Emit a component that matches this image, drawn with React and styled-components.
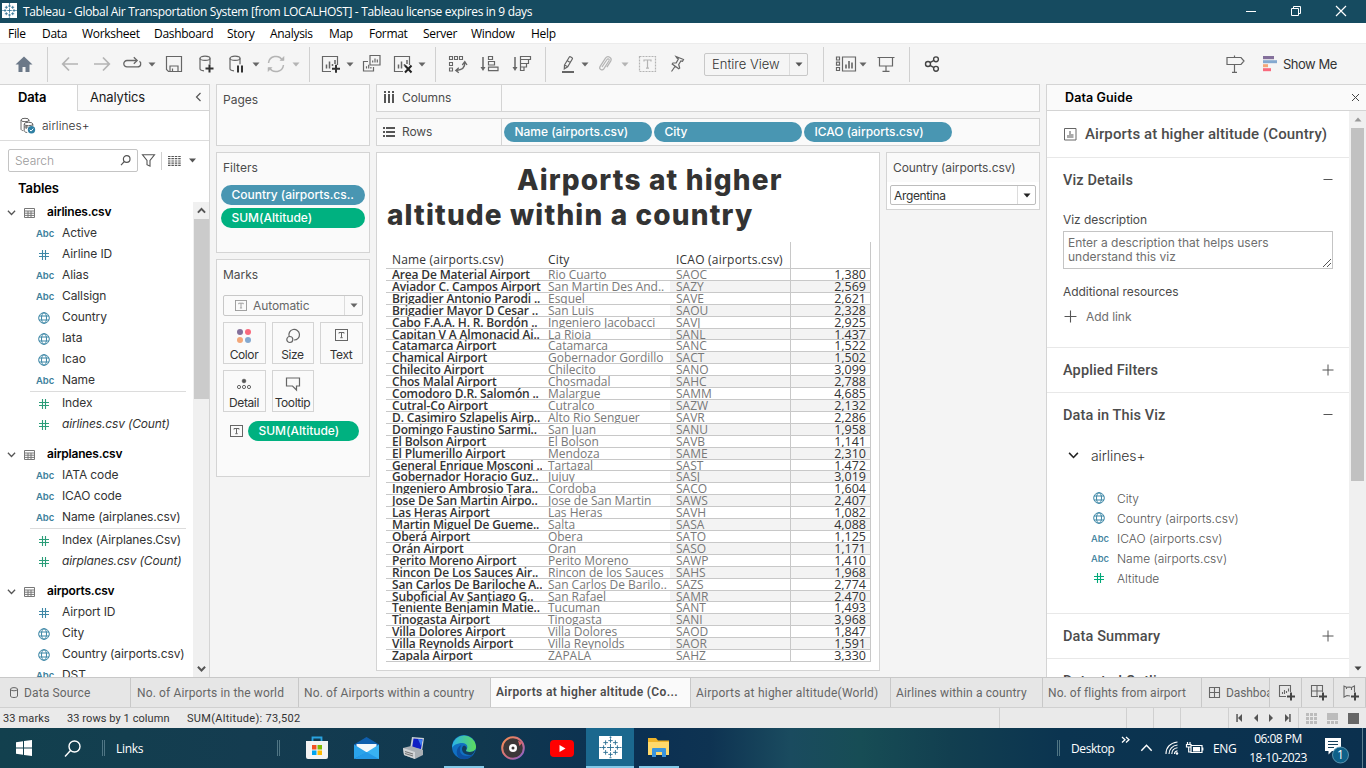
import React from 'react';
import styled, { createGlobalStyle, css } from 'styled-components';

const sans = '"Inter", "Liberation Sans", sans-serif';
const segoe = '"Open Sans", "Noto Sans", sans-serif';
const roboto = '"Roboto", "Liberation Sans", sans-serif';
const line = '#d4d4d4';
const blue = '#4996b2';
const green = '#00b180';

const Global = createGlobalStyle`
  * { box-sizing: border-box; }
  body { margin: 0; overflow: hidden; background: #f5f5f5; font-family: ${sans}; }
`;

const Window = styled.div`
  width: 1366px;
  height: 768px;
  display: flex;
  flex-direction: column;
  overflow: hidden;
  color: #333;
  font-size: 12px;
  white-space: nowrap;
`;

const Icon = styled.svg`
  display: block;
  flex: none;
  fill: none;
  overflow: visible;
`;

/* ---------- title bar and menu ---------- */

const TitleBar = styled.header`
  height: 23px;
  flex: none;
  display: flex;
  align-items: center;
  padding: 0 20px 2px 2px;
  background: #164b60;
  color: #fff;
  font: 12px ${segoe};
`;
const TitleText = styled.span`
  margin-left: 6px;
  padding-top: 2px;
  letter-spacing: -0.34px;
`;
const WindowButtons = styled.div`
  margin-left: auto;
  display: flex;
  gap: 35px;
`;
const MenuBar = styled.nav`
  height: 20px;
  flex: none;
  display: flex;
  align-items: center;
  padding: 1px 0 0 8px;
  background: #fff;
  color: #000;
  font: 12px ${segoe};
`;
const MenuItem = styled.span`
  width: ${(p) => p.$w}px;
  flex: none;
  letter-spacing: -0.3px;
`;

/* ---------- toolbar ---------- */

const Toolbar = styled.div`
  height: 41px;
  flex: none;
  display: flex;
  align-items: center;
  background: #f5f5f5;
  border-top: 1px solid #ececec;
`;
const Tool = styled.div`
  flex: none;
  margin-left: ${(p) => p.$gap}px;
  opacity: ${(p) => (p.$off ? 0.45 : 1)};
`;
const Divider = styled.i`
  flex: none;
  width: 1px;
  height: 35px;
  margin-left: ${(p) => p.$gap}px;
  background: #d0d0d0;
`;
const ViewSelect = styled.div`
  flex: none;
  width: 104px;
  height: 23px;
  margin-left: 17px;
  display: flex;
  align-items: center;
  border: 1px solid #c8c8c8;
  border-radius: 2px;
  color: #333;
  font-size: 13px;
  font-weight: 300;
`;
const SelectText = styled.span`
  flex: 1;
  padding-left: ${(p) => p.$pad}px;
  display: flex;
  align-items: center;
  gap: 6px;
  letter-spacing: ${(p) => p.$ls || 0}px;
`;
const SelectArrow = styled.span`
  align-self: stretch;
  width: 18px;
  display: flex;
  align-items: center;
  justify-content: center;
  border-left: 1px solid #dcdcdc;
`;
const ShowMe = styled.div`
  width: 103px;
  display: flex;
  align-items: center;
  gap: 5px;
  margin-left: 15px;
  font-size: 13px;
  letter-spacing: -0.5px;
`;

/* ---------- workspace ---------- */

const Workspace = styled.main`
  height: 593px;
  flex: none;
  display: flex;
  background: #f4f4f4;
`;
const DataPane = styled.aside`
  width: 210px;
  flex: none;
  display: flex;
  flex-direction: column;
  background: #fff;
  border-right: 1px solid ${line};
  border-top: 1px solid ${line};
`;
const PaneTabs = styled.div`
  height: 26px;
  flex: none;
  display: flex;
`;
const PaneTab = styled.div`
  display: flex;
  align-items: center;
  justify-content: space-between;
  width: ${(p) => p.$w}px;
  padding: 0 7px 1px ${(p) => p.$pad}px;
  color: #1a1a1a;
  font-size: 13px;
  letter-spacing: -0.15px;
  ${(p) =>
    p.$active
      ? css`
          padding-bottom: 2px;
          color: #000;
          font-weight: 600;
          letter-spacing: -0.2px;
        `
      : css`
          background: #fafafa;
          border-left: 1px solid ${line};
          border-bottom: 1px solid ${line};
        `}
`;
const SourceRow = styled.div`
  height: 30px;
  flex: none;
  display: flex;
  align-items: center;
  gap: 6px;
  padding: 0 0 1px 19px;
  border-bottom: 1px solid #dcdcdc;
  color: #333;
  font-weight: 300;
`;
const SearchRow = styled.div`
  height: 39px;
  flex: none;
  display: flex;
  align-items: center;
  padding-left: 8px;
`;
const SearchBox = styled.div`
  width: 130px;
  height: 23px;
  display: flex;
  align-items: center;
  justify-content: space-between;
  padding: 0 6px;
  border: 1px solid #c4c4c4;
  border-radius: 2px;
  color: #999;
  font-weight: 300;
`;
const SearchTools = styled.div`
  display: flex;
  align-items: center;
  gap: 6px;
  margin-left: 4px;
`;
const ToolLine = styled.i`
  width: 1px;
  height: 18px;
  background: #d0d0d0;
`;
const TablesTitle = styled.div`
  height: 22px;
  flex: none;
  padding: 1px 0 0 18px;
  color: #000;
  font-size: 13px;
  line-height: 15px;
  font-weight: 600;
  letter-spacing: -0.1px;
`;
const TreeArea = styled.div`
  flex: 1;
  min-height: 0;
  display: flex;
`;
const Tree = styled.div`
  flex: 1;
  overflow: hidden;
`;
const TreeGroup = styled.section`
  margin-bottom: 9px;
`;
const GroupHeader = styled.div`
  height: 21px;
  display: flex;
  align-items: center;
  padding-left: 7px;
  color: #000;
  font-weight: 600;
  letter-spacing: -0.2px;
`;
const GroupName = styled.span`
  margin-left: 12px;
  padding-bottom: 2px;
`;
const TreeItem = styled.div`
  height: 21px;
  display: flex;
  align-items: center;
  padding-left: 35px;
  color: #333;
  font-size: 12px;
  letter-spacing: ${(p) => (p.$count ? -0.15 : -0.1)}px;
  font-style: ${(p) => (p.$count ? 'italic' : 'normal')};
`;
const FieldName = styled.span`
  padding-bottom: 2px;
`;
const FieldMark = styled.span`
  flex: none;
  width: 27px;
  display: flex;
  align-items: center;
  padding-left: ${(p) => (p.$abc ? 1 : 3)}px;
  color: #3d7f9c;
  font: ${(p) => (p.$light ? 500 : 600)} 9.5px ${sans};
  letter-spacing: -0.1px;
`;
const TreeRule = styled.div`
  height: 2px;
  margin: 0 7px 0 30px;
  border-top: 1px solid #dcdcdc;
`;
const ScrollTrack = styled.div`
  width: ${(p) => p.$w}px;
  flex: none;
  display: flex;
  flex-direction: column;
  align-items: center;
  background: #f0f0f0;
`;
const ScrollThumb = styled.i`
  width: ${(p) => p.$w}px;
  height: ${(p) => p.$h}px;
  background: ${(p) => p.$c};
`;
const ScrollEnd = styled.span`
  height: 17px;
  display: flex;
  align-items: center;
  margin-top: ${(p) => (p.$last ? 'auto' : 0)};
`;

/* ---------- cards ---------- */

const CardColumn = styled.div`
  width: 154px;
  flex: none;
  margin-left: 6px;
  display: flex;
  flex-direction: column;
  gap: 6px;
`;
const Card = styled.section`
  height: ${(p) => p.$h}px;
  flex: none;
  background: #fafafa;
  border: 1px solid ${line};
  padding: 0 4px;
`;
const CardTitle = styled.h3`
  margin: 0;
  padding: 6px 2px 0;
  height: ${(p) => p.$h || 32}px;
  color: #4c4c4c;
  font: 400 12px/17px ${sans};
`;
const Pill = styled.div`
  width: ${(p) => p.$w}px;
  height: 20px;
  flex: none;
  margin-bottom: ${(p) => p.$below || 0}px;
  padding: 0 10.5px;
  border-radius: 10px;
  background: ${(p) => (p.$measure ? green : blue)};
  color: #fff;
  font: 500 12px/20px ${sans};
  letter-spacing: -0.02px;
`;
const MarkSelect = styled.div`
  width: 140px;
  height: 21px;
  margin: 4px 0 6px 2px;
  display: flex;
  align-items: center;
  border: 1px solid #c8c8c8;
  border-radius: 2px;
  color: #666;
`;
const MarkGrid = styled.div`
  display: grid;
  grid-template-columns: 43px 42px 43px;
  grid-auto-rows: 42px;
  gap: 6px;
  padding-left: 2px;
`;
const MarkButton = styled.div`
  display: flex;
  flex-direction: column;
  align-items: center;
  justify-content: space-between;
  padding: 5px 1px 1px 0;
  border: 1px solid ${line};
  color: #333;
  font-size: 12px;
  line-height: 14px;
  letter-spacing: -0.4px;
`;
const MarkShelf = styled.div`
  display: flex;
  align-items: center;
  gap: 5px;
  margin-top: 9px;
  padding-left: 9px;
`;

/* ---------- view ---------- */

const Center = styled.div`
  width: 664px;
  flex: none;
  margin-left: 6px;
  display: flex;
  flex-direction: column;
  gap: 6px;
`;
const Shelf = styled.div`
  height: 28px;
  flex: none;
  display: flex;
  align-items: center;
  gap: 2px;
  background: #fafafa;
  border: 1px solid ${line};
`;
const ShelfName = styled.div`
  width: 125px;
  align-self: stretch;
  display: flex;
  align-items: center;
  gap: 6px;
  padding: 0 0 1px 6px;
  border-right: 1px solid ${line};
  color: #4c4c4c;
  letter-spacing: -0.1px;
`;
const CanvasRow = styled.div`
  display: flex;
  align-items: flex-start;
  gap: 6px;
`;
const Sheet = styled.section`
  width: 504px;
  height: 519px;
  flex: none;
  background: #fff;
  border: 1px solid ${line};
  padding: 10px 9px 0;
`;
const SheetTitle = styled.h1`
  height: 79px;
  margin: 0;
  padding-left: 1px;
  color: #333;
  font: 800 28px/35px ${sans};
  letter-spacing: 1.15px;
`;
const TitleLine = styled.span`
  display: block;
  padding-left: ${(p) => p.$indent}px;
`;
const Grid = styled.div`
  width: 485px;
  color: #333;
`;
const HeadRow = styled.div`
  height: 27px;
  display: flex;
  border-bottom: 1px solid #c8c8c8;
`;
const DataRow = styled.div`
  height: ${(p) => (p.$short ? 11 : 12)}px;
  display: flex;
  border-bottom: 1px solid #c8c8c8;
  line-height: ${(p) => (p.$short ? 11 : 12)}px;
`;
const Cell = styled.span`
  width: ${(p) => p.$w}px;
  flex: none;
  padding: ${(p) => (p.$head ? '9px 0 0 6px' : '0 0 0 6px')};
  overflow: hidden;
  color: ${(p) => p.$c || '#333'};
  font-family: ${segoe};
  font-size: ${(p) => p.$size || 12}px;
  font-weight: ${(p) => p.$weight || 400};
  letter-spacing: ${(p) => p.$ls || 0}px;
  background: ${(p) => (p.$band ? '#f3f3f3' : 'transparent')};
`;
const ValueCell = styled(Cell)`
  padding: 0 4px 0 0;
  text-align: right;
  border-left: 1px solid #c8c8c8;
  border-right: 1px solid #c8c8c8;
`;
const FilterCard = styled.section`
  width: 154px;
  height: 58px;
  background: #fff;
  border: 1px solid ${line};
`;
const FilterTitle = styled.div`
  height: 29px;
  padding-left: 6px;
  background: #fafafa;
  color: #4c4c4c;
  line-height: 29px;
  letter-spacing: -0.1px;
`;
const FilterSelect = styled.div`
  height: 20px;
  margin: 3px 3px 0;
  display: flex;
  align-items: center;
  border: 1px solid #bdbdbd;
  border-radius: 2px;
  background: #fff;
`;

/* ---------- data guide ---------- */

const Guide = styled.aside`
  width: 320px;
  margin-left: 6px;
  flex: none;
  display: flex;
  flex-direction: column;
  background: #fff;
  border-left: 1px solid ${line};
  border-top: 1px solid ${line};
`;
const GuideHeader = styled.div`
  height: 26px;
  flex: none;
  display: flex;
  align-items: center;
  justify-content: space-between;
  padding: 0 7px 1px 18px;
  background: #fafafa;
  border-bottom: 1px solid ${line};
  color: #000;
  font-size: 12.5px;
  font-weight: 600;
  letter-spacing: 0.12px;
`;
const GuideBody = styled.div`
  flex: 1;
  min-height: 0;
  display: flex;
`;
const GuideContent = styled.div`
  flex: 1;
  overflow: hidden;
`;
const GuideSection = styled.section`
  height: ${(p) => p.$h}px;
  padding: 0 15px 0 16px;
  border-bottom: 1px solid #e8e8e8;
`;
const GuideTitle = styled.div`
  height: 46px;
  display: flex;
  align-items: center;
  gap: 8px;
  padding-left: 1px;
  font: 500 15px ${roboto};
  letter-spacing: 0.1px;
  color: #4c4c4c;
`;
const SectionHead = styled.div`
  height: 44px;
  display: flex;
  align-items: center;
  justify-content: space-between;
  color: #4c4c4c;
  font: 500 14.5px ${roboto};
  letter-spacing: 0.12px;
`;
const FormLabel = styled.div`
  height: ${(p) => p.$h}px;
  padding-top: ${(p) => p.$top}px;
  color: #4a4a4a;
  line-height: 16px;
  letter-spacing: -0.05px;
`;
const Description = styled.div`
  position: relative;
  width: 270px;
  height: 38px;
  padding: 4px;
  border: 1px solid #c4c4c4;
  color: #6e6e6e;
  line-height: 14px;
`;
const Grip = styled(Icon)`
  position: absolute;
  right: 1px;
  bottom: 1px;
`;
const AddLink = styled.div`
  display: flex;
  align-items: center;
  gap: 9px;
  height: 17px;
  padding-left: 1px;
  color: #6e6e6e;
  letter-spacing: -0.05px;
`;
const SourceName = styled.div`
  height: 37px;
  display: flex;
  align-items: center;
  gap: 12px;
  padding-left: 5px;
  color: #333;
  font-size: 14px;
  font-weight: 300;
  letter-spacing: -0.1px;
`;
const GuideFields = styled.div`
  padding: 15px 0 0 27px;
`;
const GuideField = styled.div`
  height: 20px;
  display: flex;
  align-items: center;
  padding-bottom: 2px;
  color: #555;
  font-weight: 300;
`;

/* ---------- sheet tabs and status ---------- */

const SheetTabs = styled.div`
  height: 31px;
  flex: none;
  display: flex;
  background: #e6e6e6;
  border-top: 1px solid #c8c8c8;
  border-bottom: 1px solid #d0d0d0;
`;
const SheetTab = styled.div`
  width: ${(p) => p.$w}px;
  flex: none;
  display: flex;
  align-items: center;
  gap: 6px;
  padding-left: ${(p) => p.$pad || 5}px;
  overflow: hidden;
  border-right: 1px solid #c8c8c8;
  color: #666;
  font: ${(p) => (p.$active ? 600 : 400)} 12px ${roboto};
  letter-spacing: ${(p) => p.$ls ?? 0.13}px;
  ${(p) => p.$active && 'background:#fafafa;color:#4c4c4c;padding-bottom:2px;'}
`;
const StatusBar = styled.div`
  height: 20px;
  flex: none;
  display: flex;
  align-items: center;
  background: #eaeaea;
  padding-left: 3px;
  color: #333;
  font: 11px ${roboto};
`;
const StatusText = styled.span`
  width: ${(p) => p.$w}px;
  letter-spacing: ${(p) => p.$ls}px;
`;
const StatusCell = styled.div`
  width: ${(p) => p.$w}px;
  align-self: stretch;
  display: flex;
  align-items: center;
  justify-content: center;
  gap: ${(p) => p.$gap || 9}px;
  border-left: 1px solid #d0d0d0;
`;

/* ---------- taskbar ---------- */

const Taskbar = styled.footer`
  height: 40px;
  flex: none;
  display: flex;
  align-items: center;
  color: #fff;
  font: 12px ${segoe};
  background: linear-gradient(90deg, #12404e 0, #143c50 250px, #10384f 480px, #0b3052 640px, #0e3352 710px, #1a4b5f 790px, #174d55 860px, #123f50 950px, #0b3450 1060px, #0b304e 1366px);
`;
const TaskItem = styled.div`
  flex: none;
  width: ${(p) => p.$w}px;
  height: 40px;
  margin-left: ${(p) => p.$gap || 0}px;
  display: flex;
  align-items: center;
  justify-content: center;
  background: ${(p) => (p.$active ? '#1b688e' : 'transparent')};
  border-bottom: ${(p) => (p.$open ? '2px solid #84c9e8' : '0')};
`;
const TaskText = styled.span`
  flex: none;
  width: ${(p) => p.$w}px;
  margin-left: ${(p) => p.$gap || 0}px;
  letter-spacing: ${(p) => p.$ls || 0}px;
`;
const TaskHandle = styled.i`
  flex: none;
  width: 3px;
  height: 16px;
  margin-left: ${(p) => p.$gap}px;
  border: solid #4f7584;
  border-width: 0 1px;
`;
const Clock = styled.div`
  width: 70px;
  margin-left: 4px;
  line-height: 19px;
  text-align: center;
  letter-spacing: -0.5px;
`;
const DesktopEdge = styled.i`
  width: 1px;
  height: 40px;
  margin-left: 12px;
  background: #5d7f90;
`;

/* ---------- drawings ---------- */

const Svg = ({ w = 20, h = w, box, c = '#666', sw = 1.2, children, ...rest }) => (
  <Icon width={w} height={h} viewBox={box || `0 0 ${w} ${h}`} stroke={c} strokeWidth={sw} {...rest}>
    {children}
  </Icon>
);
const Caret = ({ w = 8, c = '#666' }) => (
  <Svg w={w} h={5} box="0 0 8 5" c="none">
    <path d="M0.5 .5h7L4 4.5z" fill={c} />
  </Svg>
);
const Plus = ({ s = 12, c = '#555' }) => (
  <Svg w={s} c={c} sw={1} box="0 0 12 12"><path d="M6 .5v11M.5 6h11" /></Svg>
);
const Minus = () => <Svg w={12} c="#555" sw={1}><path d="M1.5 5.5h9" /></Svg>;
const Chevron = ({ w = 9, c = '#555', up, sw = 1.4 }) => (
  <Svg w={w} h={w * 0.6} box="0 0 10 6" c={c} sw={sw}>
    <path d={up ? 'M1 5.2L5 1l4 4.2' : 'M1 .8L5 5l4-4.2'} />
  </Svg>
);
const Globe = () => (
  <Svg w={12} c="#3d87a6" sw={1}>
    <circle cx="6" cy="6" r="5.3" />
    <ellipse cx="6" cy="6" rx="2.5" ry="5.3" />
    <path d="M1 4h10M1 8h10" />
  </Svg>
);
const Hash = ({ c = '#3d87a6' }) => (
  <Svg w={12} c={c} sw={1.1}><path d="M4.5 1v10M7.5 1v10M1 4.5h10M1 7.5h10" /></Svg>
);
const TextBox = ({ w = 13, h = 12, c = '#666' }) => (
  <Svg w={w} h={h} box="0 0 13 12" c={c} sw={1}>
    <rect x=".5" y=".5" width="12" height="11" />
    <path d="M4 4.6V3.5h5v1.1M6.5 3.5v5M5.3 8.7h2.4" />
  </Svg>
);
const TableIcon = () => (
  <Svg w={11} h={10} c="#777" sw={1}>
    <path d="M.5 .5h10v9H.5zM.5 3h10M.5 5.2h10M.5 7.4h10M4 3v6.5M7 3v6.5" />
  </Svg>
);
const Mark = ({ type, measure, light }) => (
  <FieldMark $abc={type === 'abc'} $light={light}>
    {type === 'abc' ? 'Abc' : type === 'geo' ? <Globe /> : <Hash c={measure ? (light ? '#00a878' : '#2a9d78') : '#3d87a6'} />}
  </FieldMark>
);
const crosses = [
  [8, 8, 2.4], [8, 3.2, 1.5], [8, 12.8, 1.5], [3.2, 8, 1.5], [12.8, 8, 1.5],
  [4.6, 4.6, 1.6], [11.4, 4.6, 1.6], [4.6, 11.4, 1.6], [11.4, 11.4, 1.6],
];
const TableauLogo = ({ s }) => (
  <Svg w={s} box="0 0 16 16" c="#2d7194" sw={s > 20 ? 0.65 : 0.9}>
    <rect width="16" height="16" fill="#fff" stroke="none" />
    {crosses.map(([x, y, r], i) => (
      <path key={i} d={`M${x - r} ${y}h${2 * r}M${x} ${y - r}v${2 * r}`} />
    ))}
    <path d="M7.3 .9h1.4M8 .3v1.4M7.3 15.1h1.4M.3 8h1.4M14.3 8h1.4" />
  </Svg>
);

const Cylinder = () => (
  <>
    <ellipse cx="9" cy="4.3" rx="5" ry="2.1" />
    <path d="M4 4.3v10.5c0 1.2 1.8 1.9 4 2M14 4.3v6" />
  </>
);
const PlusMark = ({ x, y }) => (
  <path d={`M${x - 4} ${y}h8M${x} ${y - 4}v8`} stroke="#333" strokeWidth="2" />
);

const HomeIcon = () => (
  <Svg c="none"><path d="M10 2.5L1.5 10.5h3V18h4v-5h3v5h4v-7.5h3z" fill="#6b7888" /></Svg>
);
const ArrowIcon = ({ right }) => (
  <Svg c="#666" sw={1.7}>
    <path d={right ? 'M2 10h15M11 3.5l6.3 6.5-6.3 6.5' : 'M18 10H3M9 3.5L2.7 10 9 16.5'} />
  </Svg>
);
const LoopIcon = () => (
  <Svg sw={1.3}>
    <path d="M14.5 6.5H5a3.200 3.200 0 000 6.400h10.500c3.500 0 4.200-4 2-5.600" />
    <path d="M11.800 3.200l3.400 3.300-3.400 3.300" />
  </Svg>
);
const SaveIcon = () => (
  <Svg><path d="M2.5 2.5h15v15H4.5l-2-2zM6 17.5v-5.5h8v5.5M8.5 17.5v-3" /></Svg>
);
const AddSourceIcon = () => <Svg><Cylinder /><PlusMark x={13.5} y={14.5} /></Svg>;
const PauseIcon = () => (
  <Svg><Cylinder /><path d="M12 11.5v7M16 11.5v7" stroke="#333" strokeWidth="2" /></Svg>
);
const RefreshIcon = () => (
  <Svg sw={1.5}>
    <path d="M2.5 9a7.5 7.5 0 0114-2.7M17.5 11a7.5 7.5 0 01-14 2.7" />
    <path d="M14 6.5h4V2.5zM6 13.5H2v4z" fill="#666" strokeWidth=".5" />
  </Svg>
);
const NewSheetIcon = ({ clear }) => (
  <Svg>
    <path d="M10 17.5H1.5v-15h15V11" />
    <path d="M5.5 14.5v-4M8.5 14.5v-7M11.5 12v-2M14 10V6" strokeWidth="1.5" />
    {clear ? <path d="M12 11.5l6.5 7M18.5 11.5l-6.5 7" stroke="#222" strokeWidth="2" /> : <PlusMark x={15} y={14.8} />}
  </Svg>
);
const DuplicateIcon = () => (
  <Svg>
    <path d="M8 1.5h10v9.5H8zM6 7.5H1.5v9.5h10V13" />
    <path d="M10.7 8.5V6.5M13 8.5V4.5M15.3 8.5V5.5M4.5 14.5v-2.3M6.7 14.5v-3.7M8.9 14.5V13" />
  </Svg>
);
const SwapIcon = () => (
  <Svg sw={1.1}>
    <path d="M1.5 2.5h3v3h-3zM6.5 2.5h3v3h-3zM11.5 2.5h3v3h-3zM1.5 8.5h3v3h-3zM1.5 14h3v3h-3z" />
    <path d="M16.8 8.5c.3 4.5-2.5 7.5-8.5 8M14.3 11l2.5-3.3L19 11M10.8 13.800l-3 2.700 3 2.300" strokeWidth="1.3" />
  </Svg>
);
const SortIcon = ({ desc }) => (
  <Svg>
    <path d="M2 3v12" strokeWidth="1.5" />
    <path d="M-.5 13h5L2 17z" fill="#666" stroke="none" />
    {desc ? (
      <path d="M7.500 2.500h10v3h-10zM7.500 5.500h8v4h-8zM7.500 9.500h6v3.500h-6zM7.500 13h3.500v3.500H7.500z" />
    ) : (
      <path d="M7.500 2.500h4v3h-4zM7.500 7.500h6v3.500h-6zM7.500 13.200h9.500v3.500H7.500z" />
    )}
  </Svg>
);
const PenIcon = () => (
  <Svg sw={1.2}>
    <path d="M6.500 11l4.700-7.800c.3-.5.8-.6 1.200-.4l1.600 1c.5.3.6.8.3 1.200L9.700 12.800l-3.400 2zM6.500 11l3.200 1.800M9.300 6.800l3 1.800" />
    <path d="M4 18h12" strokeWidth="2" />
  </Svg>
);
const ClipIcon = () => (
  <Svg><path d="M7 13l5-7.5c1-1.4 2.8-.3 2 1.2l-5.2 8.2c-1.6 2.3-5.2.3-3.8-2.3l5.5-8.4c2.4-3.3 7-.4 5.2 2.9l-3.8 6" /></Svg>
);
const LabelIcon = () => (
  <Svg>
    <rect x="1.5" y="2.5" width="16" height="15" strokeDasharray="2 1" />
    <path d="M6 7.5V6h7v1.5M9.5 6v8M8 14.2h3" />
  </Svg>
);
const PinIcon = () => (
  <Svg><path d="M9 2.5l7.5 3-1 1.8-1.6-.3-2.2 3.5 1 3.5-1 .8-6.5-4.8.7-1 3.3-.2 2.2-3.8-1.4-1zM8 12.500l-3.500 5" /></Svg>
);
const ShowCardsIcon = () => (
  <Svg w={22} h={20}>
    <path d="M1.5 3h3v3h-3zM1.5 8.2h3v3h-3zM1.5 13.5h3v3h-3zM7.5 3h13v14h-13z" />
    <path d="M11 14.5v-4M14 14.5V7M17 14.5v-6" strokeWidth="1.6" />
  </Svg>
);
const PresentIcon = () => (
  <Svg><path d="M1.5 3.5h17M3.5 3.5v8.5h13V3.5M10 12v5M6.5 17.3h7" strokeWidth="1.2" /></Svg>
);
const ShareIcon = () => (
  <Svg sw={1.4} c="#444">
    <circle cx="6" cy="10" r="2.5" /><circle cx="14" cy="5.3" r="2.4" /><circle cx="14" cy="14.8" r="2.4" />
    <path d="M8 8.7l4-2.3M8 11.3l4 2.3" />
  </Svg>
);
const SignIcon = () => (
  <Svg><path d="M2 3.5h14l3 3.5-3 3.5H2zM9.5 1.5v2M9.5 10.5V18M7 18.4h5" /></Svg>
);
const ShowMeIcon = () => (
  <Svg w={18} h={16} c="none">
    <path d="M3 0h11v3.200H3z" fill="#84709b" /><path d="M3 4.200h14v3H3z" fill="#84a9d0" />
    <path d="M3 8.200h5v3H3z" fill="#f3a779" /><path d="M3 12.200h8v3H3z" fill="#f96a7d" />
  </Svg>
);

/* ---------- data ---------- */

const groups = [
  {
    name: 'airlines.csv',
    fields: [['abc', 'Active'], ['num', 'Airline ID'], ['abc', 'Alias'], ['abc', 'Callsign'], ['geo', 'Country'], ['geo', 'Iata'], ['geo', 'Icao'], ['abc', 'Name']],
    measures: ['Index', 'airlines.csv (Count)'],
  },
  {
    name: 'airplanes.csv',
    fields: [['abc', 'IATA code'], ['abc', 'ICAO code'], ['abc', 'Name (airplanes.csv)']],
    measures: ['Index (Airplanes.Csv)', 'airplanes.csv (Count)'],
  },
  {
    name: 'airports.csv',
    fields: [['num', 'Airport ID'], ['geo', 'City'], ['geo', 'Country (airports.csv)'], ['abc', 'DST']],
    measures: [],
  },
];

const airports = `Area De Material Airport|Rio Cuarto|SAOC|1,380
Aviador C. Campos Airport|San Martin Des And..|SAZY|2,569
Brigadier Antonio Parodi ..|Esquel|SAVE|2,621
Brigadier Mayor D Cesar ..|San Luis|SAOU|2,328
Cabo F.A.A. H. R. Bordón ..|Ingeniero Jacobacci|SAVJ|2,925
Capitan V A Almonacid Ai..|La Rioja|SANL|1,437
Catamarca Airport|Catamarca|SANC|1,522
Chamical Airport|Gobernador Gordillo|SACT|1,502
Chilecito Airport|Chilecito|SANO|3,099
Chos Malal Airport|Chosmadal|SAHC|2,788
Comodoro D.R. Salomón ..|Malargue|SAMM|4,685
Cutral-Co Airport|Cutralco|SAZW|2,132
D. Casimiro Szlapelis Airp..|Alto Rio Senguer|SAVR|2,286
Domingo Faustino Sarmi..|San Juan|SANU|1,958
El Bolson Airport|El Bolson|SAVB|1,141
El Plumerillo Airport|Mendoza|SAME|2,310
General Enrique Mosconi ..|Tartagal|SAST|1,472
Gobernador Horacio Guz..|Jujuy|SASJ|3,019
Ingeniero Ambrosio Tara..|Cordoba|SACO|1,604
Jose De San Martin Airpo..|Jose de San Martin|SAWS|2,407
Las Heras Airport|Las Heras|SAVH|1,082
Martin Miguel De Gueme..|Salta|SASA|4,088
Oberá Airport|Obera|SATO|1,125
Orán Airport|Oran|SASO|1,171
Perito Moreno Airport|Perito Moreno|SAWP|1,410
Rincon De Los Sauces Air..|Rincon de los Sauces|SAHS|1,968
San Carlos De Bariloche A..|San Carlos De Barilo..|SAZS|2,774
Suboficial Ay Santiago G..|San Rafael|SAMR|2,470
Teniente Benjamin Matie..|Tucuman|SANT|1,493
Tinogasta Airport|Tinogasta|SANI|3,968
Villa Dolores Airport|Villa Dolores|SAOD|1,847
Villa Reynolds Airport|Villa Reynolds|SAOR|1,591
Zapala Airport|ZAPALA|SAHZ|3,330`.split('\n').map((r) => r.split('|'));

const menus = [['File', 34], ['Data', 40], ['Worksheet', 72], ['Dashboard', 73], ['Story', 43], ['Analysis', 59], ['Map', 40], ['Format', 54], ['Server', 48], ['Window', 60], ['Help', 40]];

const tools = [
  [14, HomeIcon], 13, [12, ArrowIcon, { off: true }], [12, ArrowIcon, { right: true, off: true }],
  [10, LoopIcon], [6, Caret], [8, SaveIcon], [12, AddSourceIcon], [10, PauseIcon], [6, Caret],
  [6, RefreshIcon, { off: true }], [6, Caret, { off: true }], 9,
  [11, NewSheetIcon], [5, Caret], [8, DuplicateIcon], [11, NewSheetIcon, { clear: true }], [5, Caret], 9,
  [12, SwapIcon], [13, SortIcon], [12, SortIcon, { desc: true }], 12,
  [12, PenIcon], [3, Caret], [6, ClipIcon, { off: true }], [6, Caret, { off: true }], [9, LabelIcon, { off: true }], [9, PinIcon],
];
const toolsAfter = [15, [11, ShowCardsIcon], [2, Caret], [9, PresentIcon], 13, [12, ShareIcon]];

const renderTool = (t, i) => {
  if (typeof t === 'number') return <Divider key={i} $gap={t} />;
  const [gap, Glyph, { off, ...props } = {}] = t;
  return <Tool key={i} $gap={gap} $off={off}><Glyph {...props} /></Tool>;
};

/* ---------- sections ---------- */

function TreePane() {
  return (
    <DataPane>
      <PaneTabs>
        <PaneTab $w={77} $pad={18} $active>Data</PaneTab>
        <PaneTab $w={132} $pad={12}>
          Analytics
          <Svg w={7} h={10} c="#555"><path d="M5.500 1L1.500 5l4 4" /></Svg>
        </PaneTab>
      </PaneTabs>
      <SourceRow>
        <Svg w={17} h={17} c="#666" sw={1}>
          <ellipse cx="6" cy="3" rx="4" ry="1.700" />
          <path d="M2 3v9c0 1 1 1.500 2.300 1.700M10 3v1.500" />
          <ellipse cx="9.500" cy="7" rx="4.300" ry="1.700" />
          <path d="M5.200 7v6.500c0 1.200 1.500 2 3 2M13.800 7v2M5.200 10h4M7.200 8v4" />
          <circle cx="12.500" cy="12.800" r="3.700" fill="#2f7fa3" stroke="none" />
          <path d="M10.800 12.800l1.300 1.300 2.200-2.500" stroke="#fff" />
        </Svg>
        airlines+
      </SourceRow>
      <SearchRow>
        <SearchBox>
          Search
          <Svg w={11} h={11} c="#555"><circle cx="6.700" cy="4" r="3.300" /><path d="M4.200 6.600L1 10.200" /></Svg>
        </SearchBox>
        <SearchTools>
          <Svg w={13} h={13} c="#555" sw={1.1}><path d="M.5 .8h12L8 6.500v5.700l-3-1.500V6.500z" /></Svg>
          <ToolLine />
          <Svg w={13} h={10} c="#555"><path d="M0 .5h13M0 2.700h13M0 5h13M0 7.200h13M0 9.400h13" strokeDasharray="2.5 .9" /></Svg>
        </SearchTools>
        <Tool $gap={7}><Caret w={9} c="#555" /></Tool>
      </SearchRow>
      <TablesTitle>Tables</TablesTitle>
      <TreeArea>
        <Tree>
          {groups.map((g) => (
            <TreeGroup key={g.name}>
              <GroupHeader>
                <Chevron />
                <Tool $gap={8}><TableIcon /></Tool>
                <GroupName>{g.name}</GroupName>
              </GroupHeader>
              {g.fields.map(([type, name]) => (
                <TreeItem key={name}><Mark type={type} /><FieldName>{name}</FieldName></TreeItem>
              ))}
              {g.measures.length > 0 && <TreeRule />}
              {g.measures.map((name, i) => (
                <TreeItem key={name} $count={i === 1}><Mark type="num" measure /><FieldName>{name}</FieldName></TreeItem>
              ))}
            </TreeGroup>
          ))}
        </Tree>
        <ScrollTrack $w={16}>
          <ScrollEnd><Chevron up sw={2.2} /></ScrollEnd>
          <ScrollThumb $w={15} $h={180} $c="#cbcbcb" />
          <ScrollEnd $last><Chevron sw={2.2} /></ScrollEnd>
        </ScrollTrack>
      </TreeArea>
    </DataPane>
  );
}

function Cards() {
  return (
    <CardColumn>
      <Card $h={62}><CardTitle>Pages</CardTitle></Card>
      <Card $h={101}>
        <CardTitle>Filters</CardTitle>
        <Pill $w={144} $below={3}>Country (airports.cs..</Pill>
        <Pill $w={144} $measure>SUM(Altitude)</Pill>
      </Card>
      <Card $h={218}>
        <CardTitle $h={31}>Marks</CardTitle>
        <MarkSelect>
          <SelectText $pad={11} $ls={-0.1}><TextBox w={12} h={11} c="#999" />Automatic</SelectText>
          <SelectArrow><Caret /></SelectArrow>
        </MarkSelect>
        <MarkGrid>
          <MarkButton>
            <Svg w={16} h={16} c="none">
              <circle cx="4" cy="4" r="3" fill="#84709b" /><circle cx="12" cy="4" r="3" fill="#f96a7d" />
              <circle cx="4" cy="12" r="3" fill="#f3a779" /><circle cx="12" cy="12" r="3" fill="#84a9d0" />
            </Svg>
            Color
          </MarkButton>
          <MarkButton>
            <Svg w={16} h={16}>
              <path d="M4.200 8.500A5.300 5.300 0 119 12" /><circle cx="4.800" cy="11.500" r="3" />
            </Svg>
            Size
          </MarkButton>
          <MarkButton>
            <Svg w={13} h={14} c="none"><g transform="translate(0 1)"><TextBox /></g></Svg>
            Text
          </MarkButton>
          <MarkButton>
            <Svg w={16} h={16} sw={1}>
              <circle cx="8" cy="5" r="1.800" fill="#555" /><circle cx="3" cy="11" r="1.600" /><circle cx="8" cy="11" r="1.600" /><circle cx="13" cy="11" r="1.600" />
            </Svg>
            Detail
          </MarkButton>
          <MarkButton>
            <Svg w={16} h={16}><path d="M1.500 2h13v8h-3v4L7.500 10h-6z" /></Svg>
            Tooltip
          </MarkButton>
        </MarkGrid>
        <MarkShelf>
          <TextBox />
          <Pill $w={111} $measure>SUM(Altitude)</Pill>
        </MarkShelf>
      </Card>
    </CardColumn>
  );
}

function ViewArea() {
  return (
    <Center>
      <Shelf>
        <ShelfName>
          <Svg w={13} h={13} c="none"><path d="M1 0h2v2H1zM5 0h2v2H5zM9 0h2v2H9zM1 3h2v9H1zM5 3h2v9H5zM9 3h2v9H9z" fill="#555" /></Svg>
          Columns
        </ShelfName>
      </Shelf>
      <Shelf>
        <ShelfName>
          <Svg w={13} h={11} c="none"><path d="M0 1h2v2H0zM0 5h2v2H0zM0 9h2v2H0zM3 1h9v2H3zM3 5h9v2H3zM3 9h9v2H3z" fill="#555" /></Svg>
          Rows
        </ShelfName>
        <Pill $w={148}>Name (airports.csv)</Pill>
        <Pill $w={148}>City</Pill>
        <Pill $w={148}>ICAO (airports.csv)</Pill>
      </Shelf>
      <CanvasRow>
        <Sheet>
          <SheetTitle>
            <TitleLine $indent={130}>Airports at higher</TitleLine>
            <TitleLine $indent={0}>altitude within a country</TitleLine>
          </SheetTitle>
          <Grid>
            <HeadRow>
              <Cell $w={156} $ls={0.18} $head>Name (airports.csv)</Cell>
              <Cell $w={128} $ls={0.15} $head>City</Cell>
              <Cell $w={120} $ls={0.22} $head>ICAO (airports.csv)</Cell>
              <ValueCell $w={81} />
            </HeadRow>
            {airports.map(([name, city, icao, alt], i) => {
              const band = i % 2 === 1;
              return (
                <DataRow key={icao} $short={i % 11 === 5}>
                  <Cell $w={156} $weight={600} $ls={-0.16}>{name}</Cell>
                  <Cell $w={128} $c="#787878" $ls={-0.03}>{city}</Cell>
                  <Cell $w={120} $c="#787878" $band={band}>{icao}</Cell>
                  <ValueCell $w={81} $band={band} $size={12.5}>{alt}</ValueCell>
                </DataRow>
              );
            })}
          </Grid>
        </Sheet>
        <FilterCard>
          <FilterTitle>Country (airports.csv)</FilterTitle>
          <FilterSelect>
            <SelectText $pad={3} $ls={-0.35}>Argentina</SelectText>
            <SelectArrow><Caret c="#222" /></SelectArrow>
          </FilterSelect>
        </FilterCard>
      </CanvasRow>
    </Center>
  );
}

function DataGuide() {
  return (
    <Guide>
      <GuideHeader>
        Data Guide
        <Svg w={7} h={7} c="#444" sw={1}><path d="M0 0l7 7M7 0L0 7" /></Svg>
      </GuideHeader>
      <GuideBody>
        <GuideContent>
          <GuideSection $h={47}>
            <GuideTitle>
              <Svg w={13} h={13} c="#666" sw={1}><path d="M.5 .5h11.500v11.500H.5z" /><path d="M3 10V7h2V3h2v3h2.500v4z" fill="#aaa" stroke="none" /></Svg>
              Airports at higher altitude (Country)
            </GuideTitle>
          </GuideSection>
          <GuideSection $h={190}>
            <SectionHead>Viz Details<Minus /></SectionHead>
            <FormLabel $h={29} $top={10}>Viz description</FormLabel>
            <Description>
              Enter a description that helps users<br />understand this viz
              <Grip width="8" height="8" viewBox="0 0 8 8" stroke="#555"><path d="M0 8l8-8M4 8l4-4" /></Grip>
            </Description>
            <FormLabel $h={39} $top={15}>Additional resources</FormLabel>
            <AddLink><Plus s={13} />Add link</AddLink>
          </GuideSection>
          <GuideSection $h={45}><SectionHead>Applied Filters<Plus /></SectionHead></GuideSection>
          <GuideSection $h={221}>
            <SectionHead>Data in This Viz<Minus /></SectionHead>
            <SourceName><Chevron w={11} c="#222" />airlines+</SourceName>
            <GuideFields>
              <GuideField><Mark light type="geo" />City</GuideField>
              <GuideField><Mark light type="geo" />Country (airports.csv)</GuideField>
              <GuideField><Mark light type="abc" />ICAO (airports.csv)</GuideField>
              <GuideField><Mark light type="abc" />Name (airports.csv)</GuideField>
              <GuideField><Mark light type="num" measure />Altitude</GuideField>
            </GuideFields>
          </GuideSection>
          <GuideSection $h={45}><SectionHead>Data Summary<Plus /></SectionHead></GuideSection>
          <GuideSection $h={45}><SectionHead>Detected Outliers</SectionHead></GuideSection>
        </GuideContent>
        <ScrollTrack $w={17}>
          <ScrollEnd><Svg w={8} h={5} c="none"><path d="M.5 4.500h7L4 .5z" fill="#999" /></Svg></ScrollEnd>
          <ScrollThumb $w={13} $h={353} $c="#c1c1c1" />
          <ScrollEnd $last><Caret c="#444" /></ScrollEnd>
        </ScrollTrack>
      </GuideBody>
    </Guide>
  );
}

const AddSheet = ({ kind }) => (
  <Svg w={17} h={17} sw={1.1}>
    {kind === 0 && <path d="M8 12.500H1.500v-11h11V8M4.500 10V8M6.500 10V6M8.500 9V7M10.500 7.500V4.500" />}
    {kind === 1 && <path d="M8 12.500H1.500v-11h11V8M1.500 7h11M7 1.500v11" />}
    {kind === 2 && <path d="M8 12L5 11.500 2 13V2l2.500 1.200L7.500 3l2 .5 3-1.500v6M4.500 3v2M9.500 3.500V6" />}
    <path d="M9 12.500h8M13 8.500v8" stroke="#444" strokeWidth="2" />
  </Svg>
);

function BottomTabs() {
  return (
    <SheetTabs>
      <SheetTab $w={131} $pad={10}>
        <Svg w={8} h={11} sw={1}><ellipse cx="4" cy="2.200" rx="3.500" ry="1.600" /><path d="M.5 2.200v6.800c0 2 7 2 7 0V2.200" /></Svg>
        Data Source
      </SheetTab>
      <SheetTab $w={168} $pad={6} $ls={0.13}>No. of Airports in the world</SheetTab>
      <SheetTab $w={192}>No. of Airports within a country</SheetTab>
      <SheetTab $w={200} $active $ls={0.35}>Airports at higher altitude (Co...</SheetTab>
      <SheetTab $w={200} $ls={0.22}>Airports at higher altitude(World)</SheetTab>
      <SheetTab $w={152}>Airlines within a country</SheetTab>
      <SheetTab $w={159} $ls={0.08}>No. of flights from airport</SheetTab>
      <SheetTab $w={68} $pad={7} $ls={-0.1}>
        <Svg w={11} h={11} sw={1.1}><path d="M.5 .5h10v10H.5zM5.500 .5v10M.5 5.500h10" /></Svg>
        Dashboard
      </SheetTab>
      <SheetTab $w={32} $pad={8}><AddSheet kind={0} /></SheetTab>
      <SheetTab $w={32} $pad={8}><AddSheet kind={1} /></SheetTab>
      <SheetTab $w={32} $pad={8}><AddSheet kind={2} /></SheetTab>
    </SheetTabs>
  );
}

const NavGlyph = ({ flip, end }) => (
  <Svg w={7} h={8} c="none" transform={flip ? 'scale(-1 1)' : undefined}>
    <path d="M1 0l4 4-4 4z" fill="#555" />
    {end && <path d="M5.200 0h1.500v8H5.200z" fill="#555" />}
  </Svg>
);

function Status() {
  return (
    <StatusBar>
      <StatusText $w={64} $ls={0.15}>33 marks</StatusText>
      <StatusText $w={120} $ls={0.08}>33 rows by 1 column</StatusText>
      <StatusText $w={812} $ls={0.3}>SUM(Altitude): 73,502</StatusText>
      <StatusCell $w={127} /><StatusCell $w={27} /><StatusCell $w={27} /><StatusCell $w={48} />
      <StatusCell $w={70}>
        <NavGlyph flip end /><NavGlyph flip /><NavGlyph /><NavGlyph end />
      </StatusCell>
      <StatusCell $w={68} $gap={10}>
        <Svg w={11} h={11} c="none"><path d="M0 0h3v3H0zM4 0h3v3H4zM8 0h3v3H8zM0 4h3v3H0zM4 4h3v3H4zM8 4h3v3H8zM0 8h3v3H0zM4 8h3v3H4zM8 8h3v3H8z" fill="#bcbcbc" /></Svg>
        <Svg w={11} h={11} c="none"><path d="M0 0h11v7H0zM0 8h3v3H0zM4 8h3v3H4zM8 8h3v3H8z" fill="#bcbcbc" /></Svg>
        <Svg w={11} h={11} c="none"><path d="M0 0h11v11H0z" fill="#666" /></Svg>
      </StatusCell>
    </StatusBar>
  );
}

function WindowsTaskbar() {
  return (
    <Taskbar>
      <TaskItem $w={48}>
        <Svg w={16} h={16} c="none"><path d="M0 2.300L7 1.300v6.200H0zM8 1.100L16 0v7.500H8zM0 8.500h7v6.200l-7-1zM8 8.500h8V16l-8-1.100z" fill="#fff" /></Svg>
      </TaskItem>
      <TaskItem $w={48}>
        <Svg w={17} h={17} c="#fff" sw={1.4}><circle cx="10.500" cy="6.500" r="5.500" /><path d="M6.500 10.500L1 16.500" /></Svg>
      </TaskItem>
      <TaskHandle $gap={6} />
      <TaskText $gap={11} $w={28} $ls={-0.3}>Links</TaskText>
      <TaskHandle $gap={133} />
      <TaskItem $gap={12} $w={50}>
        <Svg w={24} h={24} c="none">
          <path d="M7.500 6V1.500h9V6" stroke="#29a3e0" strokeWidth="1.800" />
          <path d="M1 5h22v16a2 2 0 01-2 2H3a2 2 0 01-2-2z" fill="#f3f3f3" />
          <path d="M7 9h4.500v4.500H7z" fill="#f25022" /><path d="M12.500 9H17v4.500h-4.500z" fill="#7fba00" />
          <path d="M7 14.500h4.500V19H7z" fill="#00a4ef" /><path d="M12.500 14.500H17V19h-4.500z" fill="#ffb900" />
        </Svg>
      </TaskItem>
      <TaskItem $w={48}>
        <Svg w={25} h={24} c="none">
          <path d="M0 8.500L12.500 1 25 8.500V22H0z" fill="#0f5fae" />
          <path d="M2.500 8h20v5l-10 5-10-5z" fill="#f4f8fb" />
          <path d="M0 8.500l13 8L0 23z" fill="#2aa3ea" />
          <path d="M25 8.500L2 23h23z" fill="#38b2f2" />
          <path d="M25 23L12.500 16 0 23z" fill="#2499e6" />
        </Svg>
      </TaskItem>
      <TaskItem $w={48}>
        <Svg w={24} h={24} c="none">
          <path d="M10 1l12 1-2 13-12-2z" fill="#c9d0d6" /><path d="M11.500 2.500l9 .8-1.500 9.800-9-1.200z" fill="#101fc4" />
          <path d="M16 3l4.500.4-1.200 7z" fill="#3b7cf2" />
          <path d="M1 12l8-2 12 4v5l-8 4-11-4z" fill="#a9afb4" /><path d="M1 12l12 4v7L2 19z" fill="#d2d5d7" />
          <path d="M3 15.500l8 2.500M3 17.500l8 2.500" stroke="#777" />
        </Svg>
      </TaskItem>
      <TaskItem $gap={6} $w={40} $open>
        <Svg w={24} h={24} c="none">
          <defs>
            <linearGradient id="edgeTop" x1="0" x2="1"><stop offset="0" stopColor="#2bb3e8" /><stop offset="1" stopColor="#5ddc5a" /></linearGradient>
          </defs>
          <circle cx="12" cy="12" r="12" fill="#1170c2" />
          <path d="M.2 11A12 12 0 0124 11c.5 4-3 6-6.500 6-3 0-4-1.200-3-2.500 2-2.500.5-6.500-4-6.500C5 8 1 10.500 .2 13z" fill="url(#edgeTop)" />
          <path d="M8 15c0 5 5 7.500 13 4.800A12 12 0 018 23.500C3 20 4 12 9.500 10 8.500 11 8 13 8 15z" fill="#0d4fa0" />
          <path d="M10 14c0-2 1-3 2-3.500 2 .5 3.500 2.500 2.200 4.200-1 1.300.3 2.300 3.300 2.300 2.500 0 4.500-.8 5.500-2-.5 2-1.500 3.700-3 4.700-5 1-10-1.200-10-5.700z" fill="#123e5c" />
        </Svg>
      </TaskItem>
      <TaskItem $gap={5} $w={48}>
        <Svg w={24} h={24} c="none">
          <defs>
            <linearGradient id="ring" x1="0" x2="1" y2="1"><stop offset=".1" stopColor="#f28a5b" /><stop offset=".6" stopColor="#c86b87" /><stop offset="1" stopColor="#7e62d8" /></linearGradient>
          </defs>
          <circle cx="12" cy="12" r="10.800" fill="#3c3839" stroke="url(#ring)" strokeWidth="2" />
          <circle cx="12" cy="12" r="4" fill="#fff" /><circle cx="12" cy="12" r="1.500" fill="#3c3839" />
          <path d="M17 4.500l4 2.500-2.500 3z" fill="#e2666d" />
        </Svg>
      </TaskItem>
      <TaskItem $w={49}>
        <Svg w={24} h={17} c="none"><rect width="24" height="17" rx="4" fill="#f00" /><path d="M9.500 5l6 3.500-6 3.500z" fill="#fff" /></Svg>
      </TaskItem>
      <TaskItem $w={48} $active $open><TableauLogo s={23} /></TaskItem>
      <TaskItem $gap={5} $w={40} $open>
        <Svg w={22} h={20} c="none">
          <path d="M0 1h8l2 2.500h11V17H0z" fill="#f0b429" /><path d="M0 5h21v13H0z" fill="#ffd96b" />
          <path d="M4 20v-8a1 1 0 011-1h12a1 1 0 011 1v8h-4v-5H8v5z" fill="#3a95dd" />
        </Svg>
      </TaskItem>
      <TaskHandle $gap={378} />
      <TaskText $gap={11} $w={48} $ls={-0.4}>Desktop</TaskText>
      <Tool $gap={2}><Svg w={9} h={28} c="#fff" sw={1.3}><path d="M1 3l3 2.700-3 2.700M5 3l3 2.700-3 2.700" /></Svg></Tool>
      <Tool $gap={10}><Chevron w={13} c="#fff" up sw={1.1} /></Tool>
      <Tool $gap={12}>
        <Svg w={14} h={14} c="#fff" sw={1.1}>
          <path d="M1 13C1 6 6 2 12.500 1M4 13c0-5 3.500-8.500 8.500-9M6.800 13c0-3.300 2.200-6 5.700-6.300M9.500 13c0-1.500 1-3 3-3.300" />
          <circle cx="12" cy="12.500" r="1.200" fill="#fff" stroke="none" />
        </Svg>
      </Tool>
      <Tool $gap={7}>
        <Svg w={18} h={14} c="#fff" sw={1.2}>
          <path d="M5 4.500h11v7H5zM16.800 6.500v3M1.500 1v2.500M4 1v2.500M.5 3.500h4.500v2.500H.5zM2.700 6v5H5" />
          <path d="M7 6h7v4.500H7z" fill="#fff" stroke="none" />
        </Svg>
      </Tool>
      <TaskText $gap={9} $w={26} $ls={-0.3}>ENG</TaskText>
      <Clock>06:08 PM<br />18-10-2023</Clock>
      <Tool $gap={11}>
        <Svg w={26} h={26} c="none">
          <path d="M1 3h16v13h-9l-3.500 3.500V16H1z" fill="#fff" />
          <path d="M4 6.500h10M4 9.500h10M4 12.500h6" stroke="#16405a" />
          <circle cx="16.500" cy="20" r="8" fill="#0e6088" stroke="#6da5bd" strokeWidth=".8" />
          <text x="16.500" y="24.300" textAnchor="middle" fontSize="12" fontFamily="Open Sans" fill="#fff">1</text>
        </Svg>
      </Tool>
      <DesktopEdge />
    </Taskbar>
  );
}

export default function App() {
  return (
    <Window>
      <Global />
      <TitleBar>
        <TableauLogo s={15} />
        <TitleText>Tableau - Global Air Transportation System [from LOCALHOST] - Tableau license expires in 9 days</TitleText>
        <WindowButtons>
          <Svg w={10} h={10} c="#fff" sw={1}><path d="M0 5.500h10" /></Svg>
          <Svg w={10} h={10} c="#fff" sw={1}><path d="M.5 2.500h7v7h-7zM2.500 2.500v-2h7v7h-2" /></Svg>
          <Svg w={10} h={10} c="#fff" sw={1.2}><path d="M0 0l10 10M10 0L0 10" /></Svg>
        </WindowButtons>
      </TitleBar>
      <MenuBar>{menus.map(([m, w]) => <MenuItem key={m} $w={w}>{m}</MenuItem>)}</MenuBar>
      <Toolbar>
        {tools.map(renderTool)}
        <ViewSelect><SelectText $pad={7}>Entire View</SelectText><SelectArrow><Caret c="#555" /></SelectArrow></ViewSelect>
        {toolsAfter.map(renderTool)}
        <Tool $gap={283}><SignIcon /></Tool>
        <ShowMe><ShowMeIcon />Show Me</ShowMe>
      </Toolbar>
      <Workspace>
        <TreePane />
        <Cards />
        <ViewArea />
        <DataGuide />
      </Workspace>
      <BottomTabs />
      <Status />
      <WindowsTaskbar />
    </Window>
  );
}
